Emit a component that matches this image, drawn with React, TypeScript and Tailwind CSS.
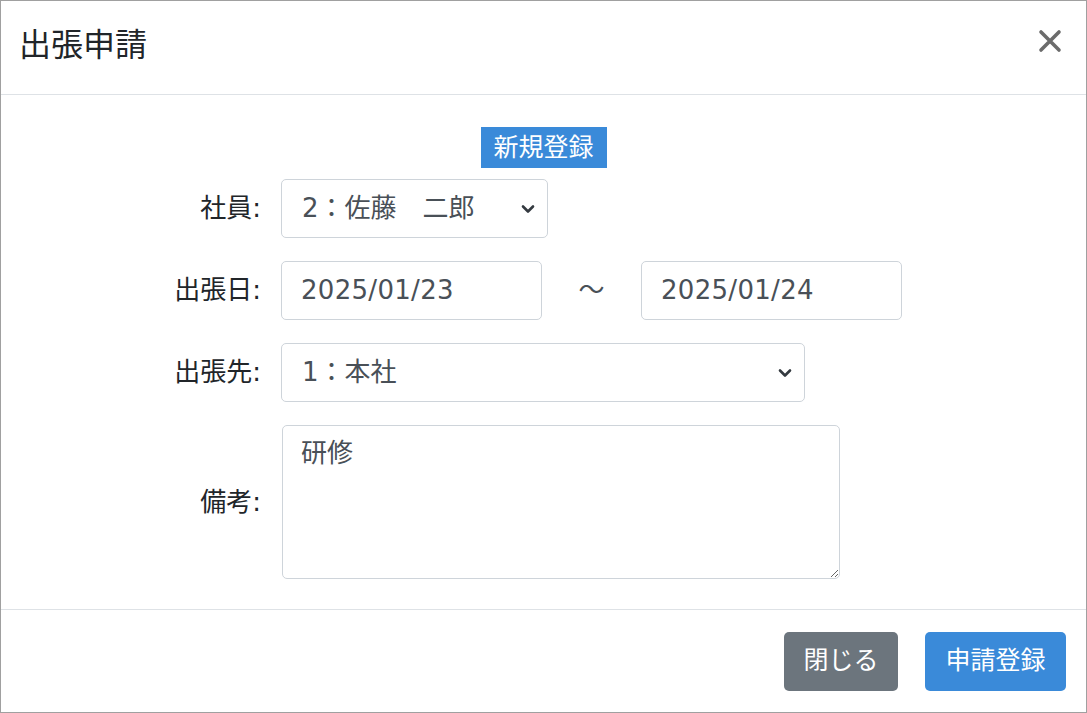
import React from 'react';

const font = { fontFamily: '"DejaVu Sans", "Noto Sans CJK JP", sans-serif' };

function Chevron() {
  return (
    <svg width="14" height="10" viewBox="0 0 14 10" className="shrink-0">
      <path d="M2 2.5 L7 7.5 L12 2.5" fill="none" stroke="#343a40" strokeWidth="2.6" strokeLinecap="round" strokeLinejoin="round" />
    </svg>
  );
}

function Row({ label, children }: { label: string; children: React.ReactNode }) {
  return (
    <div className="flex items-center">
      <div className="w-[261px] text-right text-[26px] text-[#212529] pr-[1px]">{label}</div>
      <div className="ml-[19px] flex items-center">{children}</div>
    </div>
  );
}

function SelectBox({ value, width }: { value: string; width: string }) {
  return (
    <div className={`${width} h-[59px] flex items-center justify-between pl-[20px] pr-[12px] border border-[#ced4da] rounded-[5px] bg-white text-[26px] text-[#495057]`}>
      <span>{value}</span>
      <Chevron />
    </div>
  );
}

function DateBox({ value }: { value: string }) {
  return (
    <div className="w-[261px] h-[59px] flex items-center pl-[19px] border border-[#ced4da] rounded-[5px] bg-white text-[26px] tracking-[0.3px] text-[#495057]">
      {value}
    </div>
  );
}

export default function App() {
  return (
    <div style={font} className="w-[1087px] h-[713px] border border-[#a0a0a0] bg-white flex flex-col overflow-hidden">
      {/* Header */}
      <div className="h-[94px] shrink-0 flex items-start justify-between pl-[18px] pr-[24px] pt-[26px] border-b border-[#dee2e6]">
        <h1 className="text-[32px] text-[#212529] leading-[36px]">出張申請</h1>
        <svg width="24" height="24" viewBox="0 0 24 24" className="mt-[2px]">
          <path d="M3 3 L21 21 M21 3 L3 21" stroke="#6b6b6b" strokeWidth="3.6" strokeLinecap="round" />
        </svg>
      </div>

      {/* Body */}
      <div className="flex-1 pt-[32px]">
        <div className="flex justify-center">
          <div className="w-[126px] h-[41px] flex items-center justify-center bg-[#3a8ad9] text-white text-[25px]">新規登録</div>
        </div>
        <div className="mt-[11px] flex flex-col gap-[23px]">
          <Row label="社員:">
            <SelectBox value="2：佐藤　二郎" width="w-[267px]" />
          </Row>
          <Row label="出張日:">
            <DateBox value="2025/01/23" />
            <span className="w-[99px] text-center text-[26px] text-[#495057]">～</span>
            <DateBox value="2025/01/24" />
          </Row>
          <Row label="出張先:">
            <SelectBox value="1：本社" width="w-[524px]" />
          </Row>
          <Row label="備考:">
            <textarea
              readOnly
              defaultValue="研修"
              className="w-[558px] h-[154px] ml-[1px] px-[18px] py-[8px] border border-[#ced4da] rounded-[5px] bg-white text-[26px] text-[#495057] resize outline-none"
              style={font}
            />
          </Row>
        </div>
      </div>

      {/* Footer */}
      <div className="h-[103px] shrink-0 flex items-center justify-end gap-[27px] pr-[20px] border-t border-[#dee2e6]">
        <button className="w-[114px] h-[59px] rounded-[5px] bg-[#6c757d] text-white text-[25px]" style={font}>閉じる</button>
        <button className="w-[141px] h-[59px] rounded-[5px] bg-[#3a8ad9] text-white text-[25px]" style={font}>申請登録</button>
      </div>
    </div>
  );
}
